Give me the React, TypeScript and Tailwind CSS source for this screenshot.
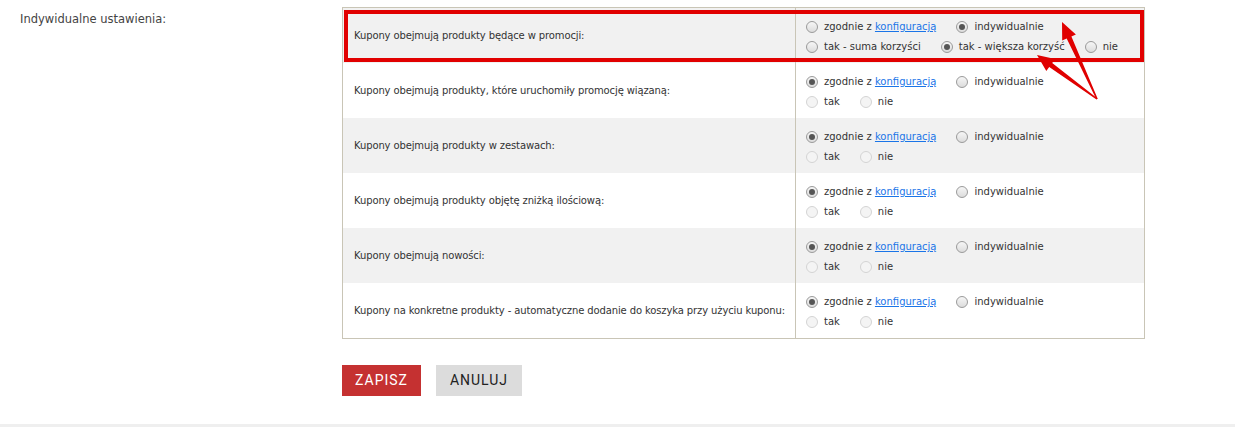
import React from "react";

const font = { fontFamily: "'DejaVu Sans', Tahoma, sans-serif" };

function Radio({ checked = false, disabled = false }: { checked?: boolean; disabled?: boolean }) {
  return (
    <span
      className={
        "relative inline-flex h-[12px] w-[12px] shrink-0 items-center justify-center rounded-full border " +
        (disabled
          ? "border-[#d4d4d4] bg-[#f4f4f4]"
          : "border-[#9a9a9a] bg-gradient-to-b from-[#f6f6f6] to-[#dcdcdc]")
      }
    >
      {checked && <span className="h-[6px] w-[6px] rounded-full bg-[#555]" />}
    </span>
  );
}

function Opt({
  checked,
  disabled,
  children,
}: {
  checked?: boolean;
  disabled?: boolean;
  children: React.ReactNode;
}) {
  return (
    <span className="mr-[20px] inline-flex items-center whitespace-nowrap">
      <Radio checked={checked} disabled={disabled} />
      <span className="ml-[6px]">{children}</span>
    </span>
  );
}

const Zgodnie = () => (
  <>
    zgodnie z <a className="text-[#1a75e8] underline">konfiguracją</a>
  </>
);

type Row = { label: string; special?: boolean };

const rows: Row[] = [
  { label: "Kupony obejmują produkty będące w promocji:", special: true },
  { label: "Kupony obejmują produkty, które uruchomiły promocję wiązaną:" },
  { label: "Kupony obejmują produkty w zestawach:" },
  { label: "Kupony obejmują produkty objętę zniżką ilościową:" },
  { label: "Kupony obejmują nowości:" },
  { label: "Kupony na konkretne produkty - automatyczne dodanie do koszyka przy użyciu kuponu:" },
];

function arrow(tx: number, ty: number, px: number, py: number) {
  const dx = px - tx;
  const dy = py - ty;
  const len = Math.hypot(dx, dy);
  const ux = dx / len;
  const uy = dy / len;
  const nx = -uy;
  const ny = ux;
  const L = 17;
  const H = 7.5;
  const S = 2.6;
  const bx = px - ux * L;
  const by = py - uy * L;
  const pts = [
    [tx + nx * 0.8, ty + ny * 0.8],
    [bx + nx * S, by + ny * S],
    [bx + nx * H, by + ny * H],
    [px, py],
    [bx - nx * H, by - ny * H],
    [bx - nx * S, by - ny * S],
    [tx - nx * 0.8, ty - ny * 0.8],
  ];
  return pts.map((p) => p[0].toFixed(1) + "," + p[1].toFixed(1)).join(" ");
}

export default function App() {
  return (
    <div className="relative h-[427px] w-[1235px] bg-white text-[#333]" style={font}>
      <div className="flex">
        <div className="w-[342px] pl-[20px] pt-[11px] text-[11.5px] text-[#444]">Indywidualne ustawienia:</div>
        <div className="pt-[7px]">
          <div className="relative w-[803px] border border-[#c9c5b6]">
            {rows.map((r, i) => (
              <div
                key={i}
                className={"flex h-[55px] text-[10px] " + (i % 2 === 0 ? "bg-[#f1f1f1]" : "bg-white")}
              >
                <div className="flex w-[453px] items-center whitespace-nowrap border-r border-[#c9c5b6] pl-[11px] tracking-[-0.12px]">
                  {r.label}
                </div>
                <div className="flex flex-1 flex-col justify-center pl-[10px] pt-[2px]">
                  <div className="flex h-[20px] items-center">
                    <Opt checked={!r.special}>
                      <Zgodnie />
                    </Opt>
                    <Opt checked={r.special}>indywidualnie</Opt>
                  </div>
                  <div className="flex h-[20px] items-center">
                    {r.special ? (
                      <>
                        <Opt>tak - suma korzyści</Opt>
                        <Opt checked>tak - większa korzyść</Opt>
                        <Opt>nie</Opt>
                      </>
                    ) : (
                      <>
                        <Opt disabled>tak</Opt>
                        <Opt disabled>nie</Opt>
                      </>
                    )}
                  </div>
                </div>
              </div>
            ))}
            <div className="pointer-events-none absolute left-[1px] top-[2px] h-[52px] w-[800px] border-[4px] border-[#e10000]" />
          </div>
          <div className="mt-[26px] flex gap-[15px]">
            <button
              className="h-[31px] w-[79px] bg-[#c53131] text-[14px] tracking-[1px] text-white"
              style={{ fontFamily: "Roboto, 'Liberation Sans', sans-serif" }}
            >
              ZAPISZ
            </button>
            <button
              className="h-[31px] w-[86px] bg-[#dcdcdc] text-[14px] tracking-[1px] text-[#222]"
              style={{ fontFamily: "Roboto, 'Liberation Sans', sans-serif" }}
            >
              ANULUJ
            </button>
          </div>
        </div>
      </div>
      <div className="absolute bottom-0 left-0 h-[3px] w-full bg-[#efefef]" />
      <svg className="pointer-events-none absolute left-0 top-0" width="1235" height="427">
        <polygon points={arrow(1097, 99, 1062, 22)} fill="#e00000" />
        <polygon points={arrow(1097, 99, 1037, 55)} fill="#e00000" />
      </svg>
    </div>
  );
}
